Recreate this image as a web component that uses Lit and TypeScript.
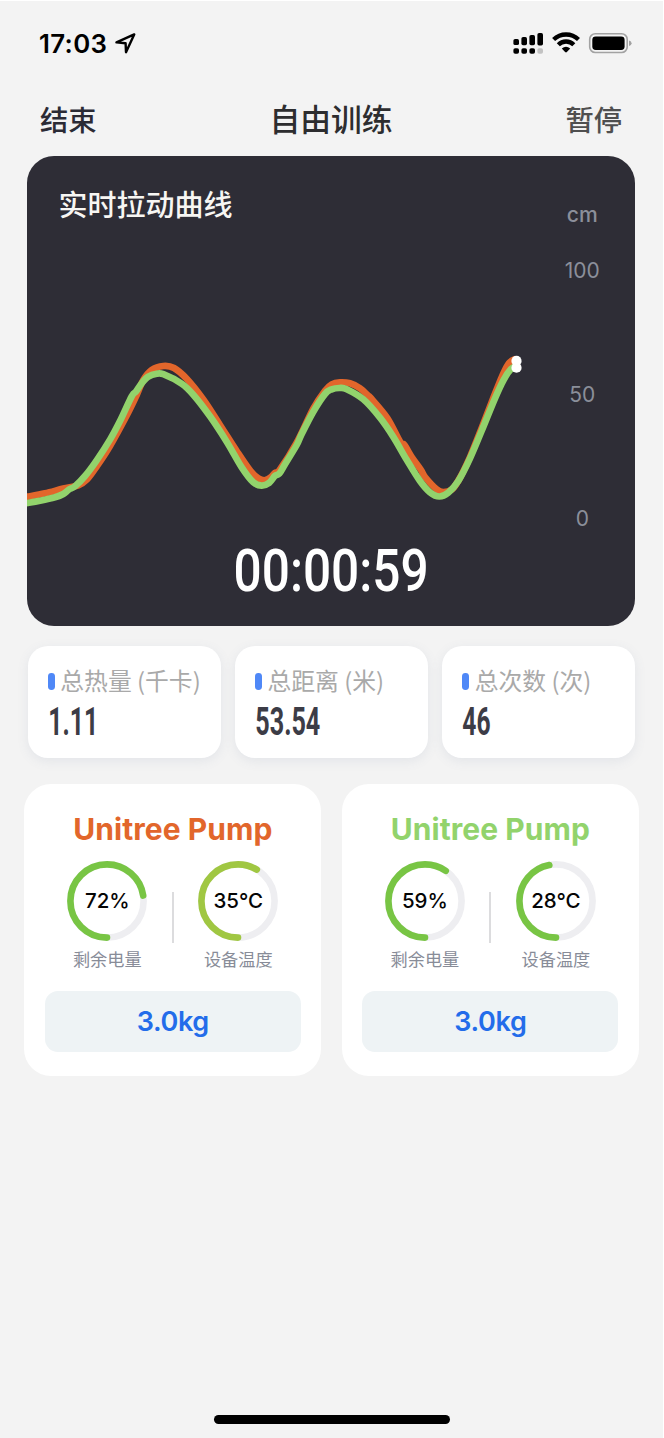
import { LitElement, html, css, svg } from "lit";
import { customElement, property } from "lit/decorators.js";

type Pt = [number, number];

const ORANGE: Pt[] = [
  [24, 497.2], [27.3, 496.7], [45, 493.3], [63.3, 488.6], [78.3, 485.3], [87, 479.5], [96.7, 466.5], [110, 446], [126.7, 415.5],
  [136.7, 395], [143.3, 380], [151.7, 370], [163.3, 366], [174, 368], [186.7, 378.8], [203.3, 399.5],
  [220, 425], [236.7, 451], [250, 470.3], [258.3, 478.3], [265, 480.2], [270.7, 477.3], [275, 472.8], [279.3, 470.5],
  [296.7, 442.7], [313.3, 408.6], [325, 390.7], [331.7, 384.3], [340, 382.3], [350, 383.3], [360, 388.2],
  [367.5, 395], [371, 398.3], [387.3, 418], [400, 441.5], [404.5, 445], [411.7, 457], [420.7, 469.5], [425, 477],
  [436.7, 489.3], [443.3, 492], [452, 489.3], [459, 479.5], [470, 457], [481.7, 428], [493.3, 398], [502.2, 376], [509, 363], [516.5, 358.5],
];

const GREEN: Pt[] = [
  [24, 503.4], [27.3, 503], [40, 500.8], [55, 497.3], [63.3, 494], [69, 489.5], [75, 486.3], [85, 476], [96.7, 460.3], [110, 439.6],
  [120, 421], [131.7, 396.3], [136, 391.5], [141.7, 383.3], [148.3, 376.7], [156.7, 373.8], [163.3, 374.2],
  [181.7, 383.7], [193.3, 394.7], [210, 416.3], [226.7, 441.7], [241.7, 467.4], [253.3, 482.3], [261.7, 485.6],
  [269.3, 482.7], [275, 475.8], [279.3, 473.6], [285, 464.3], [296.7, 445], [301.7, 434], [313.3, 411.7], [325, 394],
  [331.7, 389.3], [339.3, 388], [346.7, 389.2], [363.3, 399.3], [380, 417.7], [393.3, 436.9], [406.7, 459.8],
  [420, 481], [430, 492.3], [439.3, 496.5], [448.3, 492.7], [458.3, 481], [470, 458.3], [481.7, 430.7], [495, 398.3],
  [503.8, 379.6], [511, 369], [516.5, 366],
];

/** Catmull-Rom spline through the samples, written as cubic segments. */
function smooth(p: Pt[]): string {
  let d = `M${p[0][0]} ${p[0][1]}`;
  for (let i = 0; i < p.length - 1; i++) {
    const a = p[i - 1] ?? p[i];
    const b = p[i];
    const c = p[i + 1];
    const e = p[i + 2] ?? c;
    const k = 6;
    d += `C${b[0] + (c[0] - a[0]) / k} ${b[1] + (c[1] - a[1]) / k} ${c[0] - (e[0] - b[0]) / k} ${c[1] - (e[1] - b[1]) / k} ${c[0]} ${c[1]}`;
  }
  return d;
}

@customElement("ring-gauge")
export class RingGauge extends LitElement {
  @property() value = "";
  @property() label = "";
  @property() color = "#78c544";
  @property({ type: Number }) fraction = 0;

  static styles = css`
    :host { display: flex; flex-direction: column; align-items: center; width: 82px; }
    .ring { display: grid; place-items: center; width: 82px; height: 82px; }
    .ring > * { grid-area: 1 / 1; }
    svg { display: block; }
    .value { font: 500 20.5px/24px Inter, sans-serif; color: #050505; letter-spacing: 0; white-space: nowrap; }
    .label { margin-top: 5px; font: 400 17.2px/24px "Noto Sans CJK SC", sans-serif; color: #888c98; white-space: nowrap; }
  `;

  render() {
    const r = 36.6;
    const len = 2 * Math.PI * r;
    return html`
      <div class="ring">
        <svg width="82" height="82" viewBox="0 0 82 82" fill="none" stroke-width="6.6">
          <circle cx="41" cy="41" r=${r} stroke="#eeeef1" />
          <circle cx="41" cy="41" r=${r} stroke=${this.color} stroke-linecap="round"
            stroke-dasharray="${len * this.fraction} ${len}" transform="rotate(90 41 41)" />
        </svg>
        <span class="value">${this.value}</span>
      </div>
      <span class="label">${this.label}</span>
    `;
  }
}

@customElement("pump-card")
export class PumpCard extends LitElement {
  @property() color = "";
  @property() battery = "";
  @property() temp = "";
  @property() tempColor = "#78c544";
  @property({ type: Number }) batteryFraction = 0;
  @property({ type: Number }) tempFraction = 0;

  static styles = css`
    :host {
      box-sizing: border-box; display: flex; flex-direction: column; align-items: center;
      width: 297px; height: 292px; padding: 27px 20.5px 0; border-radius: 27px; background: #fff;
    }
    .name { font: 700 30px/36px Inter, sans-serif; letter-spacing: 0.05px; white-space: nowrap; }
    .gauges { display: flex; justify-content: center; gap: 23.5px; margin-top: 13px; height: 131px; }
    .divider { width: 2px; height: 51px; margin-top: 32px; background: #dcdcde; }
    .weight {
      box-sizing: border-box; align-self: stretch; height: 60.5px; padding-top: 2px; border-radius: 13px; background: #eef3f5; color: #236cea;
      display: grid; place-items: center; font: 600 27px/32px Inter, sans-serif; letter-spacing: -0.35px;
    }
  `;

  render() {
    return html`
      <div class="name" style="color:${this.color}">Unitree Pump</div>
      <div class="gauges">
        <ring-gauge value=${this.battery} label="剩余电量" .fraction=${this.batteryFraction}></ring-gauge>
        <div class="divider"></div>
        <ring-gauge value=${this.temp} label="设备温度" color=${this.tempColor} .fraction=${this.tempFraction}></ring-gauge>
      </div>
      <div class="weight">3.0kg</div>
    `;
  }
}

@customElement("app-root")
export class AppRoot extends LitElement {
  static styles = css`
    :host {
      box-sizing: border-box; display: flex; flex-direction: column; width: 664px; height: 1438px;
      border-top: 1px solid #fff; border-right: 1.5px solid #fff; background: #f3f3f3;
      font-family: "Noto Sans CJK SC", sans-serif; overflow: hidden;
    }
    svg { display: block; }
    .status { display: flex; align-items: center; height: 84px; padding: 1px 31px 0 39px; box-sizing: border-box; }
    .clock { font: 600 25.8px/32px Inter, sans-serif; color: #000; letter-spacing: 0.35px; margin-right: 8px; }
    .arrow { margin-right: auto; }
    .nav { box-sizing: border-box; display: grid; grid-template-columns: 1fr auto 1fr; align-items: center; height: 68px; padding: 0 41px 2px 40px; margin-bottom: 3px; font-weight: 500; }
    .end { font-size: 28.3px; color: #2b2b35; }
    .title { font-size: 30.8px; color: #2d2d2f; font-weight: 500; padding-bottom: 2px; }
    .pause { font-size: 28.3px; color: #4f4f4f; justify-self: end; }
    .card { display: grid; width: 608px; height: 470px; margin-left: 27.4px; border-radius: 27px; background: #2e2d36; overflow: hidden; flex: none; }
    .card > * { grid-area: 1 / 1; }
    .heading { padding: 25px 0 0 31px; font-size: 29px; line-height: 44px; font-weight: 500; color: #f7f6f3; }
    .axis { font: 400 21px Inter, sans-serif; fill: #8b8f9a; text-anchor: middle; }
    .unit { font-weight: 500; font-size: 22px; }
    .timer { font: 500 59px Roboto, sans-serif; fill: #fff; }
    .stats { display: grid; grid-template-columns: repeat(3, 193.5px); gap: 13.7px; margin: 20px 0 0 27.5px; }
    .stat { box-sizing: border-box; height: 112px; padding: 16px 0 0 20.5px; border-radius: 20px; background: #fff; box-shadow: 0 3px 12px rgba(90, 110, 150, 0.1); }
    .caption { display: flex; align-items: center; gap: 5.5px; height: 34px; font-size: 23.8px; color: #a9a9a9; white-space: nowrap; }
    .tick { width: 6.8px; height: 17px; margin-top: 5px; border-radius: 3.4px; background: #4f88f7; }
    .number { font: 700 38.5px Roboto, sans-serif; fill: #3c3c46; }
    .pumps { display: flex; gap: 20.6px; margin: 26px 0 0 24.3px; }
    .home { width: 236px; height: 8.7px; border-radius: 5px; background: #000; margin: auto 0 14.5px 214px; }
  `;

  private stat(label: string, unit: string, value: string, width: number) {
    return html`<div class="stat">
      <div class="caption"><i class="tick"></i><span>${label} (${unit})</span></div>
      <svg width="150" height="54" viewBox="0 0 150 54">
        <text class="number" x="0.3" y="39" textLength=${width} lengthAdjust="spacingAndGlyphs">${value}</text>
      </svg>
    </div>`;
  }

  render() {
    const dots = [0, 1, 2, 3];
    return html`
      <div class="status">
        <span class="clock">17:03</span>
        <svg class="arrow" width="21" height="21" viewBox="0 0 21 21" fill="none" stroke="#000" stroke-width="2.4" stroke-linejoin="round">
          <path d="M19.2 1.4 1.5 9.4 10.6 10.3 11 19.2Z" />
        </svg>
        <svg width="119" height="24" viewBox="0 0 119 24">
          ${dots.map((i) => svg`
            <rect x=${0.4 + i * 8} y=${7.1 - i * 2} width="5.6" height=${6 + i * 2.1} rx="1.7" />
            <rect x=${0.4 + i * 8} y="16.2" width="5.6" height="5.6" rx="1.8" fill=${i === 3 ? "#c2c2c2" : "#000"} />`)}
          <g fill="none" stroke="#000" stroke-width="4.3">
            <path d="M40.6 7.5A18 18 0 0 1 65.5 7.5" />
            <path d="M45.3 12.8A10.8 10.8 0 0 1 60.8 12.8" />
          </g>
          <path d="M48.8 16.5Q53 13.2 57.2 16.5L53.9 20.1Q53 21 52.1 20.1Z" />
          <rect x="76.7" y="1.8" width="37.5" height="18.7" rx="5.6" fill="none" stroke="#a2a2a2" stroke-width="1.6" />
          <rect x="79.3" y="4.4" width="32.3" height="13.5" rx="3.4" />
          <path d="M116 8.5q2.6.6 2.6 2.7T116 13.9Z" fill="#a2a2a2" />
        </svg>
      </div>
      <div class="nav">
        <span class="end">结束</span>
        <span class="title">自由训练</span>
        <span class="pause">暂停</span>
      </div>
      <div class="card">
        <div class="heading">实时拉动曲线</div>
        <svg width="608" height="470" viewBox="27 156 608 470">
          <g fill="none" stroke-width="6.7" stroke-linejoin="round">
            <path d=${smooth(ORANGE)} stroke="#e2662b" />
            <path d=${smooth(GREEN)} stroke="#92d36c" />
          </g>
          <circle cx="516.5" cy="360.9" r="5.1" fill="#fff" />
          <circle cx="516.5" cy="367.7" r="5.1" fill="#fff" />
          <g class="axis">
            <text class="unit" x="582.3" y="221.5" textLength="31" lengthAdjust="spacingAndGlyphs">cm</text>
            <text x="582.3" y="278">100</text>
            <text x="582.3" y="402">50</text>
            <text x="582.3" y="525.5">0</text>
          </g>
          <text class="timer" x="233.6" y="590.5" textLength="195" lengthAdjust="spacingAndGlyphs">00:00:59</text>
        </svg>
      </div>
      <div class="stats">
        ${this.stat("总热量", "千卡", "1.11", 50)}
        ${this.stat("总距离", "米", "53.54", 65)}
        ${this.stat("总次数", "次", "46", 28.2)}
      </div>
      <div class="pumps">
        <pump-card color="#e2662b" battery="72%" .batteryFraction=${0.725} temp="35°C" tempColor="#a0c742" .tempFraction=${0.585}></pump-card>
        <pump-card color="#92d36c" battery="59%" .batteryFraction=${0.595} temp="28°C" .tempFraction=${0.47}></pump-card>
      </div>
      <div class="home"></div>
    `;
  }
}
